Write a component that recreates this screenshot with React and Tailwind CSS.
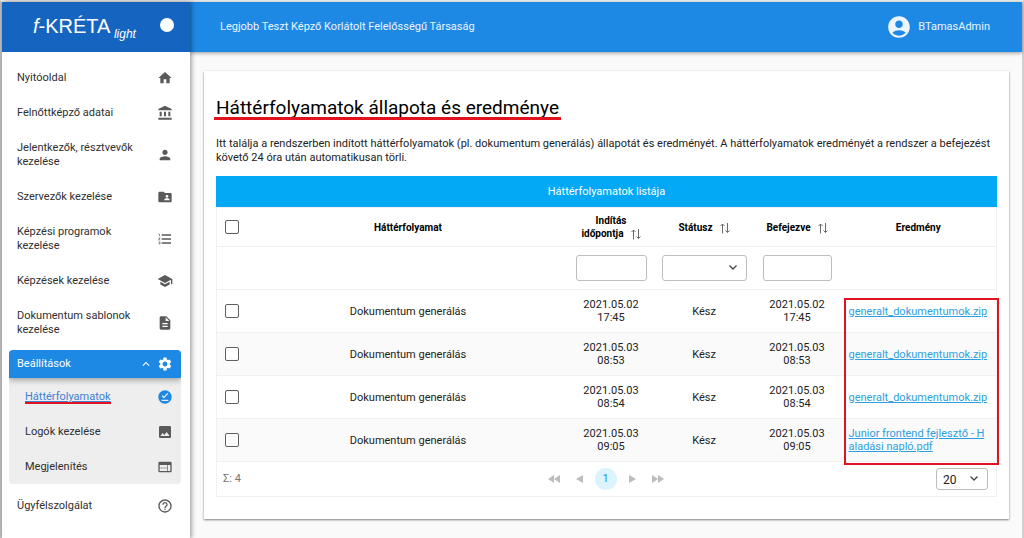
import React, { useState } from "react";
import clsx from "clsx";
import {
  MdAccountBalance, MdAccountCircle, MdDescription, MdExpandLess, MdFolderShared,
  MdFormatListNumbered, MdHelpOutline, MdHome, MdImage, MdOfflinePin, MdPerson,
  MdSchool, MdSettings, MdWeb,
} from "react-icons/md";

const MENU = [
  { label: "Nyitóoldal", icon: MdHome },
  { label: "Felnőttképző adatai", icon: MdAccountBalance },
  { label: "Jelentkezők, résztvevők kezelése", icon: MdPerson },
  { label: "Szervezők kezelése", icon: MdFolderShared },
  { label: "Képzési programok kezelése", icon: MdFormatListNumbered },
  { label: "Képzések kezelése", icon: MdSchool },
  { label: "Dokumentum sablonok kezelése", icon: MdDescription },
];

const SETTINGS_MENU = [
  { label: "Háttérfolyamatok", icon: MdOfflinePin, active: true },
  { label: "Logók kezelése", icon: MdImage },
  { label: "Megjelenítés", icon: MdWeb },
];

const ROWS = [
  { id: 1, start: ["2021.05.02", "17:45"], end: ["2021.05.02", "17:45"], file: "generalt_dokumentumok.zip" },
  { id: 2, start: ["2021.05.03", "08:53"], end: ["2021.05.03", "08:53"], file: "generalt_dokumentumok.zip" },
  { id: 3, start: ["2021.05.03", "08:54"], end: ["2021.05.03", "08:54"], file: "generalt_dokumentumok.zip" },
  { id: 4, start: ["2021.05.03", "09:05"], end: ["2021.05.03", "09:05"], file: "Junior frontend fejlesztő - Haladási napló.pdf" },
];

function SortIcon() {
  return (
    <svg viewBox="0 0 11 11" className="ml-1.5 inline h-[11px] w-[11px] fill-none stroke-[#6b6b6b] align-[-3px]" strokeWidth="1">
      <path d="M3.500 10.500V1M1.500 3l2-2 2 2M8.500 0v9.500M6.500 7.500l2 2 2-2" />
    </svg>
  );
}

function Chevron({ className }) {
  return (
    <svg viewBox="0 0 8 5" className={clsx("pointer-events-none absolute h-[5px] w-2 fill-none stroke-[#444]", className)} strokeWidth="1.3">
      <path d="M.5.5 4 4 7.500.5" />
    </svg>
  );
}

function Checkbox({ label }) {
  return (
    <input
      type="checkbox"
      aria-label={label}
      className="block h-3.5 w-3.5 appearance-none rounded-[2px] border border-[#5f5f5f] bg-white checked:bg-[#03a9f4]"
    />
  );
}

function SortHeader({ children }) {
  return (
    <button type="button" className="font-bold">
      {children}
      <SortIcon />
    </button>
  );
}

function MenuItem({ item, nested = false }) {
  const Icon = item.icon;
  return (
    <a
      href="#"
      className={clsx("flex items-center justify-between py-2.5 leading-[14px]", nested ? "pl-4 pr-2" : "px-2", item.active ? "text-[#3f7fd6]" : "text-[#2f2f2f]")}
    >
      <span className={clsx(item.active ? "relative underline" : "w-32")}>
        {item.label}
        {item.active && <span className="absolute inset-x-0 bottom-0 h-0.5 bg-[#e0131f]" />}
      </span>
      <Icon className={clsx("-my-px h-4 w-4 shrink-0", item.active ? "text-[#1e88e5]" : "text-[#5a5a5a]")} />
    </a>
  );
}

function Sidebar() {
  const [open, setOpen] = useState(true);
  return (
    <aside className="relative z-20 w-[188px] shrink-0 bg-white shadow-[1px_0_5px_rgba(0,0,0,0.45)]">
      <div className="flex h-[50px] items-center justify-between bg-[#1565c0] pl-[31px] pr-4 font-['Liberation_Sans',sans-serif] text-white">
        <div className="text-xl">
          <i>f</i>-KRÉTA <i className="-ml-px align-[-5px] text-xs">light</i>
        </div>
        <button type="button" aria-label="Menü rögzítése" className="mb-1 h-3.5 w-3.5 rounded-full bg-white" />
      </div>
      <nav className="flex flex-col gap-px pl-[7px] pr-[9px] pt-[9px]">
        {MENU.map((item) => <MenuItem key={item.label} item={item} />)}
        <div className="mb-1 mt-0.5 overflow-hidden rounded-[4px] bg-[#eeeeee]">
          <button
            type="button"
            aria-expanded={open}
            onClick={() => setOpen((o) => !o)}
            className="relative flex h-7 w-full items-center bg-[#1e88e5] px-2 text-white shadow-[0_2px_6px_rgba(0,0,0,0.35)]"
          >
            <span className="flex-1 text-left">Beállítások</span>
            <MdExpandLess className="mr-1 h-3.5 w-3.5" />
            <MdSettings className="h-4 w-4" />
          </button>
          {open && (
            <div className="flex flex-col gap-px pt-0.5">
              {SETTINGS_MENU.map((item) => <MenuItem key={item.label} item={item} nested />)}
            </div>
          )}
        </div>
        <MenuItem item={{ label: "Ügyfélszolgálat", icon: MdHelpOutline }} />
      </nav>
    </aside>
  );
}

function Pager() {
  return (
    <div className="flex items-center gap-4 text-[#bdbdbd]">
      <button type="button" aria-label="Első oldal">
        <svg viewBox="0 0 12 8" className="h-2 w-3 fill-current"><path d="M6 0v8L0 4zM12 0v8L6 4z" /></svg>
      </button>
      <button type="button" aria-label="Előző oldal">
        <svg viewBox="0 0 7 8" className="h-2 w-[7px] fill-current"><path d="M7 0v8L0 4z" /></svg>
      </button>
      <button type="button" className="-mx-1 h-[22px] w-[22px] rounded-full bg-[#dcf3fe] text-[#1e96e8]">1</button>
      <button type="button" aria-label="Következő oldal">
        <svg viewBox="0 0 7 8" className="h-2 w-[7px] fill-current"><path d="M0 0v8l7-4z" /></svg>
      </button>
      <button type="button" aria-label="Utolsó oldal">
        <svg viewBox="0 0 12 8" className="h-2 w-3 fill-current"><path d="M0 0v8l6-4zM6 0v8l6-4z" /></svg>
      </button>
    </div>
  );
}

function ProcessTable() {
  return (
    <div className="relative mt-[11px]">
      <table className="w-full table-fixed border-collapse text-center leading-[13px]">
        <caption className="h-[31px] bg-[#03a9f4] leading-[31px] text-white">Háttérfolyamatok listája</caption>
        <colgroup>
          <col className="w-8" />
          <col />
          <col className="w-[87px]" />
          <col className="w-[99px]" />
          <col className="w-[87px]" />
          <col className="w-[156px]" />
        </colgroup>
        <thead className="text-[10px] text-black">
          <tr className="h-[39px] border border-[#f0f0f0]">
            <th className="pl-2"><Checkbox label="Összes kijelölése" /></th>
            <th>Háttérfolyamat</th>
            <th><SortHeader>Indítás<br />időpontja</SortHeader></th>
            <th><SortHeader>Státusz</SortHeader></th>
            <th><SortHeader>Befejezve</SortHeader></th>
            <th>Eredmény</th>
          </tr>
          <tr className="h-[43px] border border-[#f0f0f0]">
            <td />
            <td />
            <td className="px-2">
              <input aria-label="Indítás időpontja" className="block h-[26px] w-full rounded-[3px] border border-[#bdbdbd] px-1" />
            </td>
            <td className="px-[7px]">
              <div className="relative">
                <select aria-label="Státusz" defaultValue="" className="block h-[26px] w-full appearance-none rounded-[3px] border border-[#bdbdbd] bg-white px-2">
                  <option value=""></option>
                  <option value="ready">Kész</option>
                </select>
                <Chevron className="right-2.5 top-2.5" />
              </div>
            </td>
            <td className="px-[9px]">
              <input aria-label="Befejezve" className="block h-[26px] w-full rounded-[3px] border border-[#bdbdbd] px-1" />
            </td>
            <td />
          </tr>
        </thead>
        <tbody>
          {ROWS.map((row) => (
            <tr key={row.id} className="h-[43px] border border-[#f0f0f0] even:bg-[#fafafa]">
              <td className="pl-2"><Checkbox label={`${row.id}. sor kijelölése`} /></td>
              <td>Dokumentum generálás</td>
              <td>{row.start[0]}<br />{row.start[1]}</td>
              <td>Kész</td>
              <td>{row.end[0]}<br />{row.end[1]}</td>
              <td className="break-all px-2 text-left">
                <a href="#" className="text-[#2f9fe0] underline">{row.file}</a>
              </td>
            </tr>
          ))}
        </tbody>
      </table>
      <div className="grid h-[35px] grid-cols-[1fr_auto_1fr] items-center border border-t-0 border-[#f0f0f0] pl-1.5 pr-2">
        <span className="text-[#757575]">Σ: 4</span>
        <Pager />
        <div className="relative justify-self-end">
          <select aria-label="Sorok száma" defaultValue="20" className="block h-[22px] w-[52px] appearance-none rounded-[3px] border border-[#bdbdbd] bg-white pl-1.5 pt-0.5 text-xs text-[#222]">
            <option>10</option>
            <option>20</option>
            <option>50</option>
          </select>
          <Chevron className="right-2.5 top-2" />
        </div>
      </div>
      <div className="pointer-events-none absolute -right-0.5 bottom-8 top-[122px] w-[155px] border-2 border-[#e0131f]" />
    </div>
  );
}

export default function App() {
  return (
    <div className="flex min-h-screen border-l-2 border-r-2 border-t-2 border-l-[#c4c4c4] border-r-[#d0d0d0] border-t-[#eeeeee] bg-[#fafafa] font-[Roboto,sans-serif] text-[11px] text-[#222]">
      <Sidebar />
      <div className="min-w-0 flex-1">
        <header className="relative z-10 flex h-[50px] items-center justify-between bg-[#1e88e5] pl-[30px] pr-8 text-[#eaf5ff] shadow-[0_1px_4px_rgba(0,0,0,0.4)]">
          <span>Legjobb Teszt Képző Korlátolt Felelősségű Társaság</span>
          <button type="button" className="flex items-center gap-1.5">
            <MdAccountCircle className="h-[26px] w-[26px]" />
            BTamasAdmin
          </button>
        </header>
        <main className="mb-5 ml-3.5 mr-[13px] mt-[19px] bg-white px-3 pb-[22px] pt-[25px] shadow-[0_1px_2px_rgba(0,0,0,0.5)]">
          <h1 className="relative inline-block text-[19px] leading-6 text-black">
            Háttérfolyamatok állapota és eredménye
            <span className="absolute -inset-x-0.5 bottom-0 h-[3px] bg-[#e0131f]" />
          </h1>
          <p className="mt-[17px] leading-[14px]">
            Itt találja a rendszerben indított háttérfolyamatok (pl. dokumentum generálás) állapotát és eredményét. A
            háttérfolyamatok eredményét a rendszer a befejezést követő 24 óra után automatikusan törli.
          </p>
          <ProcessTable />
        </main>
      </div>
    </div>
  );
}
